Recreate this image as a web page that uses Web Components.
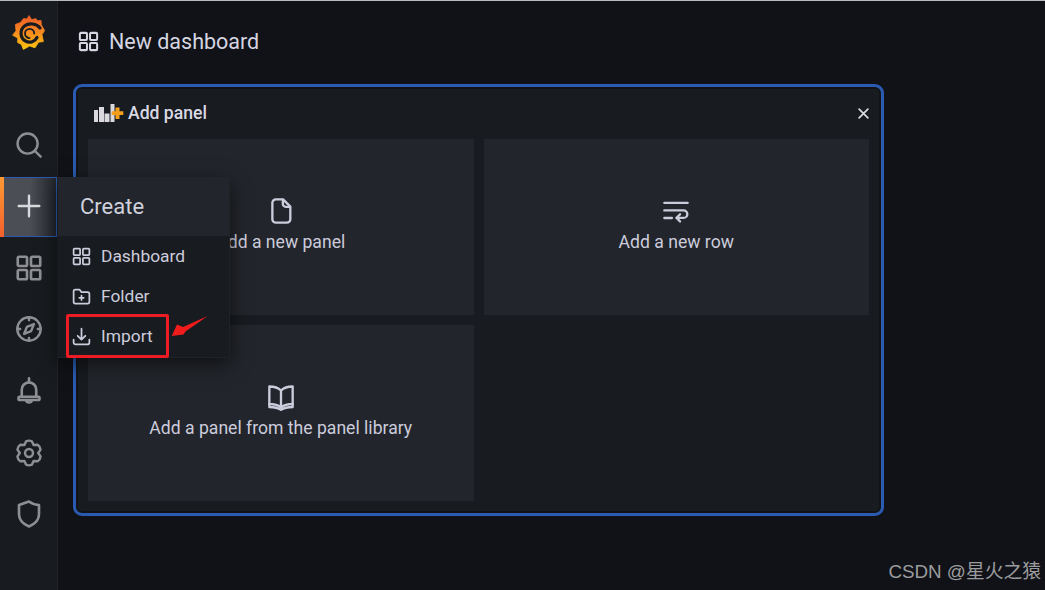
<!DOCTYPE html>
<html lang="en">
<head>
<meta charset="utf-8">
<title>New dashboard</title>
<style>
  html, body { margin: 0; height: 100%; background: #111217; overflow: hidden; }
  body { font-family: Roboto, "Liberation Sans", sans-serif; color: #ccccdc; }
</style>
</head>
<body>
<gf-app>
  <gf-sidebar slot="side">
    <gf-logo slot="logo"></gf-logo>
    <gf-nav-item icon="search" size="28"></gf-nav-item>
    <gf-nav-item icon="plus" active></gf-nav-item>
    <gf-nav-item icon="apps"></gf-nav-item>
    <gf-nav-item icon="compass" size="28"></gf-nav-item>
    <gf-nav-item icon="bell"></gf-nav-item>
    <gf-nav-item icon="cog" size="28"></gf-nav-item>
    <gf-nav-item icon="shield"></gf-nav-item>
  </gf-sidebar>
  <gf-header slot="head">New dashboard</gf-header>
  <gf-panel slot="main" heading="Add panel">
    <gf-card icon="file">Add a new panel</gf-card>
    <gf-card icon="row">Add a new row</gf-card>
    <gf-card icon="book">Add a panel from the panel library</gf-card>
  </gf-panel>
  <gf-menu slot="over" heading="Create">
    <gf-menu-item icon="apps">Dashboard</gf-menu-item>
    <gf-menu-item icon="folder">Folder</gf-menu-item>
    <gf-menu-item icon="import">Import</gf-menu-item>
  </gf-menu>
  <gf-callout slot="over"></gf-callout>
  <gf-watermark slot="over">CSDN @星火之猿</gf-watermark>
</gf-app>

<script>
// cog outline with six lobes, built once so the lobes stay even
function cogPath() {
  let d = "";
  for (let i = 0; i < 6; i++) {
    const a = (-90 + i * 60) * Math.PI / 180;
    const p = (r, o) => (12 + r * Math.cos(a + o)).toFixed(2) + " " + (12 + r * Math.sin(a + o)).toFixed(2);
    d += (i ? "L" : "M") + p(7.9, -0.52) + "L" + p(10.3, -0.24) + "Q" + p(11.2, 0) + " " + p(10.3, 0.24) + "L" + p(7.9, 0.52);
  }
  return d + "Z";
}

const ICONS = {
  search: '<circle cx="10.8" cy="10.8" r="8.6"/><path d="M17.2 17.2 22 22"/>',
  plus: '<path d="M12 2.5v19M2.5 12h19"/>',
  apps: '<rect x="3" y="3" width="7.4" height="7.4" rx="1"/><rect x="13.6" y="3" width="7.4" height="7.4" rx="1"/><rect x="3" y="13.6" width="7.4" height="7.4" rx="1"/><rect x="13.6" y="13.6" width="7.4" height="7.4" rx="1"/>',
  compass: '<circle cx="12" cy="12" r="10"/><path d="M12 2v2.4M12 19.6V22M2 12h2.4M19.6 12H22"/><path d="M16.2 7.8 13.8 13.8 7.8 16.2 10.2 10.2Z"/>',
  bell: '<path d="M6.2 16.5v-5.6a5.8 5.8 0 0 1 11.6 0v5.6"/><path d="M4.4 16.6h15.2a.8.8 0 0 1 .8.8v1a.8.8 0 0 1-.8.8H4.4a.8.8 0 0 1-.8-.8v-1a.8.8 0 0 1 .8-.8Z"/><path d="M12 1.8v3.2M9.6 19.4a2.5 2.5 0 0 0 4.8 0"/>',
  cog: '<path d="' + cogPath() + '"/><circle cx="12" cy="12" r="3.4"/>',
  shield: '<path d="M12 2 4 4.8v7.4c0 4.4 3.4 7.8 8 9.8 4.6-2 8-5.4 8-9.8V4.8C17 4.8 14.4 3.8 12 2Z"/>',
  folder: '<path d="M3 6a2 2 0 0 1 2-2h4.6l2.4 3h7a2 2 0 0 1 2 2v9a2 2 0 0 1-2 2H5a2 2 0 0 1-2-2Z"/><path d="M12 11v5M9.5 13.5h5"/>',
  import: '<path d="M12 3v12.5M7.6 11.2 12 15.6l4.4-4.4"/><path d="M3 15.5v3.3A2.2 2.2 0 0 0 5.2 21h13.6a2.2 2.2 0 0 0 2.2-2.2v-3.3"/>',
  file: '<path d="M7.6 2h6.2L20 8.2V19a3 3 0 0 1-3 3H7.6a3 3 0 0 1-3-3V5a3 3 0 0 1 3-3Z"/><path d="M13.6 2.4V6a2.4 2.4 0 0 0 2.4 2.4h3.6"/>',
  row: '<path d="M2 5h20M2 11.5h16.5a3.2 3.2 0 0 1 0 6.4H12.5M2 18h6.5"/><path d="M15.5 14.8l-3 3.1 3 3.1"/>',
  book: '<path d="M12 6.4C9.4 3.8 6 3 2 3v15c4 0 7.4.8 10 3 2.6-2.2 6-3 10-3V3c-4 0-7.4.8-10 3.4Z"/><path d="M12 6.4V21"/><path d="M2 18v2.6c4 0 7 .4 10 2.4 3-2 6-2.4 10-2.4V18"/>',
  close: '<path d="M5 5l14 14M19 5 5 19"/>'
};

class GfIcon extends HTMLElement {
  constructor() {
    super();
    const size = this.getAttribute("size") || 24;
    const weight = this.getAttribute("weight") || 2;
    this.attachShadow({ mode: "open" }).innerHTML = `
      <style>
        :host { display: block; width: ${size}px; height: ${size}px; flex: none; line-height: 0; }
        svg { width: 100%; height: 100%; fill: none; stroke: currentColor; stroke-width: ${weight};
              stroke-linecap: round; stroke-linejoin: round; }
      </style>
      <svg viewBox="0 0 24 24">${ICONS[this.getAttribute("name")] || ""}</svg>`;
  }
}
customElements.define("gf-icon", GfIcon);

class GfApp extends HTMLElement {
  constructor() {
    super();
    this.attachShadow({ mode: "open" }).innerHTML = `
      <style>
        :host { display: flex; position: relative; width: 1045px; height: 590px; box-sizing: border-box;
                border-top: 1px solid #b9babd; overflow: hidden; }
        main { flex: 1; min-width: 0; padding: 0 161px 0 15px; }
      </style>
      <slot name="side"></slot>
      <main><slot name="head"></slot><slot name="main"></slot></main>
      <slot name="over"></slot>`;
  }
}
customElements.define("gf-app", GfApp);

class GfSidebar extends HTMLElement {
  constructor() {
    super();
    this.attachShadow({ mode: "open" }).innerHTML = `
      <style>
        :host { display: flex; flex-direction: column; gap: 1.6px; flex: none; width: 58px; box-sizing: border-box;
                background: #181b1f; border-right: 1px solid #202226; }
      </style>
      <slot name="logo"></slot>
      <slot></slot>`;
  }
}
customElements.define("gf-sidebar", GfSidebar);

class GfLogo extends HTMLElement {
  constructor() {
    super();
    this.attachShadow({ mode: "open" }).innerHTML = `
      <style>
        :host { display: block; height: 112px; padding: 11px 0 0 10px; box-sizing: border-box; }
        svg { display: block; width: 38px; height: 40px; }
      </style>
      <svg viewBox="10 12 38 40">
        <defs>
          <linearGradient id="flame" x1="0" y1="0" x2="0" y2="1">
            <stop offset="0" stop-color="#ef5a29"/>
            <stop offset="0.5" stop-color="#f68b1f"/>
            <stop offset="1" stop-color="#fcc60e"/>
          </linearGradient>
        </defs>
        <path fill="url(#flame)" stroke="url(#flame)" stroke-width="0.8" stroke-linejoin="round" d="M29 15.5 31.6 19.6 36 18.6 37.2 20.8 41 20.4 41.4 25 44.6 30.6 42 34.6 43.4 41.6 38.6 42.2 35 47.8 29.6 46 23.4 49.4 21.4 44.6 17.6 42.4 17.8 38 12.6 35.2 16 30.8 15.4 24.4 20.4 22.6 23.6 18.6 27 19Z"/>
        <path fill="none" stroke="#181b1f" stroke-width="3.2" stroke-linecap="round" d="M40 28C36.5 23.5 29 22.5 24.5 26 19.5 30 20 38 25.500 41 30 43.5 35 41.5 37 37.5"/>
        <path fill="none" stroke="#181b1f" stroke-width="1.8" stroke-linecap="round" d="M34.2 33.5A4.6 4.6 0 1 0 29.6 38.1"/>
      </svg>`;
  }
}
customElements.define("gf-logo", GfLogo);

class GfNavItem extends HTMLElement {
  constructor() {
    super();
    const size = this.getAttribute("size") || 30;
    this.attachShadow({ mode: "open" }).innerHTML = `
      <style>
        :host { display: flex; align-items: center; justify-content: center; height: 60px; color: #8e8f94; }
        :host([active]) { color: transparent; }
      </style>
      <gf-icon name="${this.getAttribute("icon")}" size="${size}" weight="2.1"></gf-icon>`;
  }
}
customElements.define("gf-nav-item", GfNavItem);

class GfHeader extends HTMLElement {
  constructor() {
    super();
    this.attachShadow({ mode: "open" }).innerHTML = `
      <style>
        :host { display: flex; align-items: center; gap: 9px; height: 83px; padding: 0 0 3px 4px; box-sizing: border-box;
                font-size: 21.5px; color: #d5d6e2; }
      </style>
      <gf-icon name="apps" size="23" weight="2.1"></gf-icon>
      <span><slot></slot></span>`;
  }
}
customElements.define("gf-header", GfHeader);

class GfPanel extends HTMLElement {
  constructor() {
    super();
    this.attachShadow({ mode: "open" }).innerHTML = `
      <style>
        :host { display: block; height: 432px; box-sizing: border-box; border: 3px solid #2a5bb0; border-radius: 9px;
                background: #181b1f; box-shadow: inset 0 0 0 2px #121317; padding: 0 12px; }
        header { display: flex; align-items: center; height: 52px; font-size: 17.6px; font-weight: 500; color: #d8d9e4; }
        .bars { width: 30px; height: 18px; margin: 0 4px 0 6px; flex: none; }
        .close { margin-left: auto; margin-right: -2px; color: #d8d9dd; }
        .grid { display: grid; grid-template-columns: 1fr 1fr; grid-auto-rows: 176px; gap: 10px; }
      </style>
      <header>
        <svg class="bars" viewBox="0 0 30 18">
          <path fill="#d9d9de" d="M0 6h4v12H0zM5 3h5v15H5zM10.5 9.5h5V18h-5zM16.5 0h4v18h-4z"/>
          <path fill="#f5a01d" d="M21.500 3.500h4v3.800h3.800v3.800h-3.800v3.800h-4v-3.800h-3.800V7.300h3.800z"/>
        </svg>
        <span>${this.getAttribute("heading")}</span>
        <gf-icon class="close" name="close" size="15" weight="2.8"></gf-icon>
      </header>
      <div class="grid"><slot></slot></div>`;
  }
}
customElements.define("gf-panel", GfPanel);

class GfCard extends HTMLElement {
  constructor() {
    super();
    this.attachShadow({ mode: "open" }).innerHTML = `
      <style>
        :host { display: flex; flex-direction: column; align-items: center; justify-content: center; gap: 6px;
                background: #22252b; font-size: 17.6px; line-height: 22px; color: #ccccdc; padding-bottom: 4px; box-sizing: border-box; }
      </style>
      <gf-icon name="${this.getAttribute("icon")}" size="28" weight="2"></gf-icon>
      <span><slot></slot></span>`;
  }
}
customElements.define("gf-card", GfCard);

class GfMenu extends HTMLElement {
  constructor() {
    super();
    this.attachShadow({ mode: "open" }).innerHTML = `
      <style>
        :host { display: block; position: absolute; left: 0; top: 176px; width: 230px; height: 181px; }
        .tab { position: absolute; left: 0; top: 0; width: 57px; height: 60px; box-sizing: border-box;
               background: linear-gradient(90deg, #4c4f57, #4a4d54 55%, #22252b);
               border: 1px solid #2a5bb0; border-left: 0; }
        .tab::before { content: ""; position: absolute; left: 0; top: -1px; bottom: -1px; width: 4px;
                       background: linear-gradient(180deg, #ff9a32, #f2602d); }
        .tab gf-icon { position: absolute; left: 16px; top: 15px; color: #d8d9dd; }
        .box { position: absolute; left: 58px; top: 0; width: 172px; height: 181px; background: #181b1f;
               border-right: 1px solid #202226; border-bottom: 1px solid #202226; box-sizing: border-box;
               box-shadow: 0 6px 18px rgba(0, 0, 0, .55); }
        h2 { margin: 0; height: 59px; display: flex; align-items: center; padding-left: 22px; font-size: 22px;
             font-weight: 400; color: #d0d1de; background: #22252b; }
      </style>
      <div class="tab"><gf-icon name="plus" size="26" weight="2.2"></gf-icon></div>
      <div class="box">
        <h2>${this.getAttribute("heading")}</h2>
        <slot></slot>
      </div>`;
  }
}
customElements.define("gf-menu", GfMenu);

class GfMenuItem extends HTMLElement {
  constructor() {
    super();
    this.attachShadow({ mode: "open" }).innerHTML = `
      <style>
        :host { display: flex; align-items: center; gap: 9px; height: 40px; padding-left: 13px;
                font-size: 17.4px; color: #ccccdc; }
      </style>
      <gf-icon name="${this.getAttribute("icon")}" size="21" weight="2"></gf-icon>
      <span><slot></slot></span>`;
  }
}
customElements.define("gf-menu-item", GfMenuItem);

class GfCallout extends HTMLElement {
  constructor() {
    super();
    this.attachShadow({ mode: "open" }).innerHTML = `
      <style>
        :host { display: block; position: absolute; left: 66px; top: 303px; width: 145px; height: 55px; }
        .box { position: absolute; left: 0; top: 10px; width: 103px; height: 44px; box-sizing: border-box;
               border: 3.5px solid #ed1c24; border-radius: 2px; }
        svg { position: absolute; left: 0; top: 0; width: 145px; height: 55px; }
      </style>
      <div class="box"></div>
      <svg viewBox="66 303 145 55"><path fill="#f01c1c" d="M207.700 315 183 326 177 323.500 171.700 335 183.500 333.500 185.500 330.500Z"/></svg>`;
  }
}
customElements.define("gf-callout", GfCallout);

class GfWatermark extends HTMLElement {
  constructor() {
    super();
    this.attachShadow({ mode: "open" }).innerHTML = `
      <style>
        :host { display: block; position: absolute; right: 4px; top: 555px; white-space: nowrap;
                font: 18.8px "Liberation Sans", "Noto Sans CJK SC", sans-serif; color: #9b9c9e; }
      </style>
      <slot></slot>`;
  }
}
customElements.define("gf-watermark", GfWatermark);
</script>
</body>
</html>
